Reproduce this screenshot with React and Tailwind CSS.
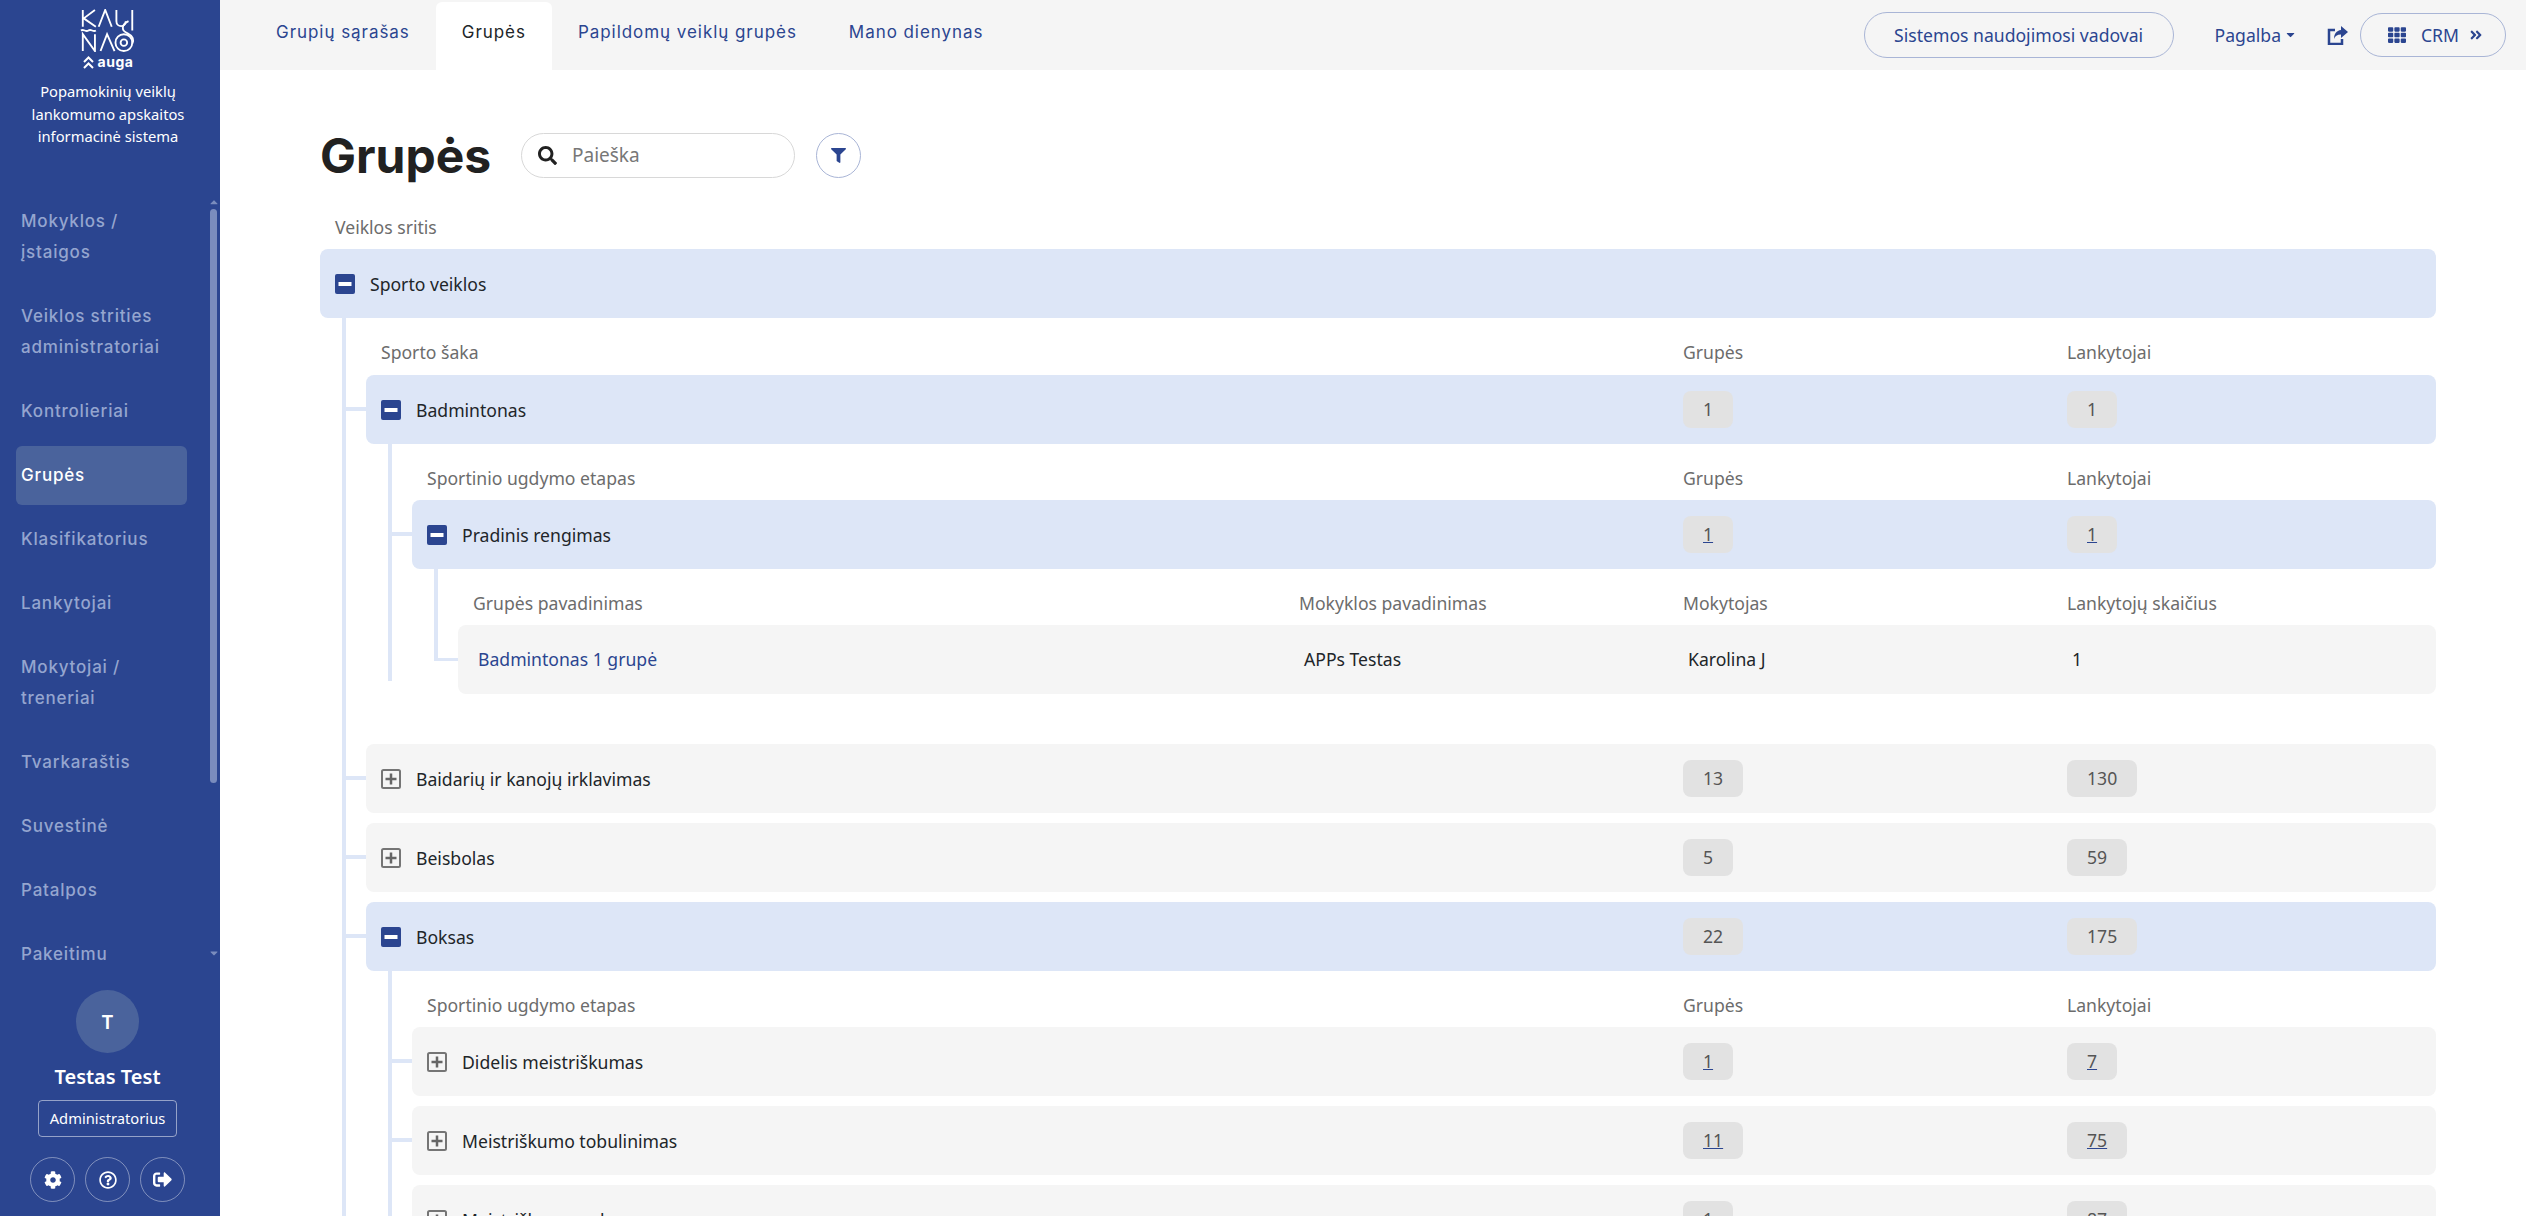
import { FaCog, FaRegQuestionCircle, FaSignOutAlt, FaSearch, FaFilter, FaTh, FaCaretDown, FaCaretUp, FaAngleDoubleRight } from "react-icons/fa"

const navItems = [
  { label: ["Mokyklos /", "įstaigos"] },
  { label: ["Veiklos strities", "administratoriai"] },
  { label: ["Kontrolieriai"] },
  { label: ["Grupės"], active: true },
  { label: ["Klasifikatorius"] },
  { label: ["Lankytojai"] },
  { label: ["Mokytojai /", "treneriai"] },
  { label: ["Tvarkaraštis"] },
  { label: ["Suvestinė"] },
  { label: ["Patalpos"] },
  { label: ["Pakeitimų"] },
]

const tabs = ["Grupių sąrašas", "Grupės", "Papildomų veiklų grupės", "Mano dienynas"]

function Logo() {
  return (
    <div className="flex flex-col items-center">
      <svg width="56" height="43" viewBox="0 0 60 46" fill="none" stroke="white" strokeWidth="2" className="block">
        <path d="M3 1v18M16 1 4 10l13 9" />
        <path d="M20 19 27 1l7 18" />
        <path d="M39 1v12c0 7 10 7 10 0 M56 1v22" />
        <path d="M1 23c3-2 5 2 8 0s5 2 8 0" />
        <path d="M3 45V27l13 18V27" />
        <path d="M22 45l7-18 8 18" />
        <path d="M52 13c-8 4-8 10-1 13 6 3 7 7 5 11" />
        <circle cx="47" cy="36" r="9" />
        <circle cx="47" cy="36" r="3.5" />
      </svg>
      <div className="flex items-center gap-[4px] mt-[2px] h-[16px]">
        <svg width="11" height="13" viewBox="0 0 11 13" fill="none" stroke="white" strokeWidth="2">
          <path d="M1 6l4.500-4.500L10 6M1 12l4.500-4.500L10 12" />
        </svg>
        <span className="font-['Inter',sans-serif] font-bold text-[14px] leading-none text-white tracking-[0.5px]">auga</span>
      </div>
    </div>
  )
}

function ShareIcon() {
  return (
    <svg width="21" height="19" viewBox="0 0 21 19" className="ml-[30px] shrink-0">
      <path d="M8 4H2v14h13v-5" fill="none" stroke="#2b4590" strokeWidth="2.500" />
      <path d="M14 0l7 6-7 6V8.500c-4 0-6 1.500-7 4.500 0-5 2.500-8.500 7-9z" fill="#2b4590" />
    </svg>
  )
}

function Sidebar() {
  return (
    <aside className="w-[220px] h-full shrink-0 bg-[#2b4590] flex flex-col text-white font-['Noto_Sans',sans-serif]">
      <div className="h-[192px] shrink-0 pt-[9px] pr-[4px] flex flex-col items-center">
        <Logo />
        <p className="mt-[10px] text-[14.720px] leading-[22.500px] text-center whitespace-nowrap">
          Popamokinių veiklų
          <br />
          lankomumo apskaitos
          <br />
          informacinė sistema
        </p>
      </div>
      <div className="relative h-[768px] shrink-0 overflow-hidden">
        <nav className="pl-[16px] pr-[33px] flex flex-col gap-[5px]">
          {navItems.map((item) => (
            <a
              key={item.label[0]}
              className={`block rounded-[6px] px-[5px] py-[14px] font-['Inter',sans-serif] font-medium text-[17px] tracking-[0.8px] leading-[31px] ${
                item.active ? "bg-[#4a639c] text-white" : "text-[#95a5cf]"
              }`}
            >
              {item.label.map((l) => (
                <div key={l} className="whitespace-nowrap">{l}</div>
              ))}
            </a>
          ))}
        </nav>
        <FaCaretUp className="absolute left-[208px] top-[4px] text-[#7a8cbd]" size={12} />
        <div className="absolute left-[210px] top-[17px] w-[7px] h-[574px] rounded-full bg-[#7a8cbd]" />
        <FaCaretDown className="absolute left-[208px] top-[755px] text-[#7a8cbd]" size={12} />
      </div>
      <div className="flex-1 flex flex-col items-center pt-[30px] pr-[5px]">
        <div className="w-[63px] h-[63px] rounded-full bg-[#4a639c] flex items-center justify-center text-[20px] font-semibold">T</div>
        <div className="mt-[9px] text-[20px] leading-[30px] font-semibold">Testas Test</div>
        <div className="mt-[8px] w-[139px] h-[37px] border border-white/50 rounded-[4px] flex items-center justify-center text-[14.720px]">Administratorius</div>
        <div className="mt-[20px] flex gap-[10px]">
          <RoundIcon><FaCog size={18} /></RoundIcon>
          <RoundIcon><FaRegQuestionCircle size={18} /></RoundIcon>
          <RoundIcon><FaSignOutAlt size={19} /></RoundIcon>
        </div>
      </div>
    </aside>
  )
}

function RoundIcon({ children }) {
  return <button className="w-[45px] h-[45px] rounded-full border border-white/40 flex items-center justify-center text-white">{children}</button>
}

function TopBar() {
  return (
    <header className="h-[70px] shrink-0 bg-[#f5f5f5] flex items-start pl-[30px] pr-[20px] font-['Noto_Sans',sans-serif] text-[#2b4590]">
      <div className="flex h-full pt-[2px]">
        {tabs.map((t) => (
          <a
            key={t}
            className={`px-[26px] pt-[17px] rounded-t-[6px] font-['Inter',sans-serif] text-[17px] tracking-[0.95px] leading-[26px] whitespace-nowrap ${
              t === "Grupės" ? "bg-white text-[#212529]" : ""
            }`}
          >
            {t}
          </a>
        ))}
      </div>
      <div className="ml-auto flex items-center h-full text-[17.600px]">
        <button className="h-[46px] w-[310px] rounded-full border border-[#a9b5d6] flex items-center justify-center">Sistemos naudojimosi vadovai</button>
        <span className="ml-[41px] flex items-center gap-[3px]">
          Pagalba <FaCaretDown size={13} />
        </span>
        <ShareIcon />
        <button className="ml-[12px] h-[44px] w-[146px] rounded-full border border-[#a9b5d6] flex items-center pl-[27px]">
          <FaTh size={18} />
          <span className="ml-[15px]">CRM</span>
          <FaAngleDoubleRight className="ml-[10px]" size={14} />
        </button>
      </div>
    </header>
  )
}

function MinusIcon() {
  return (
    <svg width="20" height="20" viewBox="0 0 20 20" className="shrink-0">
      <rect width="20" height="20" rx="2" fill="#2b4590" />
      <rect x="3.500" y="8" width="13" height="4" fill="white" />
    </svg>
  )
}

function PlusIcon() {
  return (
    <svg width="20" height="20" viewBox="0 0 20 20" fill="none" className="shrink-0">
      <rect x="1" y="1" width="18" height="18" rx="1.500" stroke="#757575" strokeWidth="2" />
      <path d="M10 4.500v11M4.500 10h11" stroke="#666" strokeWidth="2.500" />
    </svg>
  )
}

function Badge({ value, link }) {
  return (
    <span className="inline-flex items-center h-[37px] px-[20px] rounded-[8px] bg-[#e2e2e2] text-[#555]">
      <span className={link ? "underline decoration-[#2b4590]" : ""}>{value}</span>
    </span>
  )
}

function Row({ label, open, g, l, link, branch }) {
  return (
    <div className={`relative h-[69px] mb-[10px] flex items-center rounded-[8px] ${open ? "bg-[#dde6f7]" : "bg-[#f5f5f5]"}`}>
      {branch && <span className="absolute left-[-20px] top-[32px] w-[20px] h-[4px] bg-[#dde6f7]" />}
      <div className="flex-1 flex items-center pl-[15px] pt-[1px] gap-[15px] text-[#212529]">
        {open ? <MinusIcon /> : <PlusIcon />}
        <span>{label}</span>
      </div>
      {g !== undefined && (
        <>
          <div className="w-[384px]"><Badge value={g} link={link} /></div>
          <div className="w-[369px]"><Badge value={l} link={link} /></div>
        </>
      )}
    </div>
  )
}

function Heads({ title, top }) {
  return (
    <div className={`flex leading-[24px] pb-[10px] pl-[15px] text-[#6c6c6c] ${top}`}>
      <div className="flex-1">{title}</div>
      <div className="w-[384px]">Grupės</div>
      <div className="w-[369px]">Lankytojai</div>
    </div>
  )
}

// nested branch of the tree, the line runs down the left side
function Branch({ lineEnd, className = "", children }) {
  return (
    <div className={`relative ml-[22px] pl-[24px] ${className}`}>
      <span className={`absolute left-0 top-[-10px] w-[4px] bg-[#dde6f7] ${lineEnd}`} />
      {children}
    </div>
  )
}

export default function App() {
  return (
    <div className="w-full h-screen overflow-hidden flex bg-white font-['Noto_Sans',sans-serif] text-[17.600px]">
      <Sidebar />
      <div className="flex-1 min-w-0 flex flex-col h-full overflow-hidden">
        <TopBar />
        <main className="pl-[100px] pr-[90px]">
          <div className="flex items-center h-[45px] mt-[63px]">
            <h1 className="font-['Inter',sans-serif] font-bold text-[48px] leading-none text-[#212121] w-[201px]">Grupės</h1>
            <div className="w-[274px] h-[45px] rounded-full border border-[#d8d8d8] flex items-center pl-[16px] gap-[15px] text-[19px] text-[#777]">
              <FaSearch className="text-[#212121]" size={19} />
              Paieška
            </div>
            <button className="ml-[21px] w-[45px] h-[45px] rounded-full border border-[#a9b5d6] flex items-center justify-center text-[#2b4590]">
              <FaFilter size={15} />
            </button>
          </div>

          <div className="mt-[37px] h-[24px] leading-[24px] pl-[15px] text-[#6c6c6c]">Veiklos sritis</div>
          <div className="mt-[10px]">
            <Row label="Sporto veiklos" open />
            <Branch lineEnd="bottom-0">
              <Heads title="Sporto šaka" top="pt-[12px] !pb-[11px]" />
              <Row label="Badmintonas" open g={1} l={1} branch />
              <Branch lineEnd="bottom-[13px]" className="mb-[50px]">
                <Heads title="Sportinio ugdymo etapas" top="pt-[12px]" />
                <Row label="Pradinis rengimas" open g={1} l={1} link branch />
                <Branch lineEnd="bottom-[33px]">
                  <div className="flex leading-[24px] pt-[12px] pb-[10px] pl-[15px] text-[#6c6c6c]">
                    <div className="flex-1">Grupės pavadinimas</div>
                    <div className="w-[384px]">Mokyklos pavadinimas</div>
                    <div className="w-[384px]">Mokytojas</div>
                    <div className="w-[369px]">Lankytojų skaičius</div>
                  </div>
                  <div className="relative h-[69px] mb-[10px] flex items-center rounded-[8px] bg-[#f5f5f5] text-[#212529]">
                    <span className="absolute left-[-20px] top-[33px] w-[20px] h-[3px] bg-[#dde6f7]" />
                    <a className="flex-1 pl-[20px] text-[#2b4590]">Badmintonas 1 grupė</a>
                    <div className="w-[384px] pl-[5px]">APPs Testas</div>
                    <div className="w-[384px] pl-[5px]">Karolina J</div>
                    <div className="w-[369px] pl-[5px]">1</div>
                  </div>
                </Branch>
              </Branch>
              <Row label="Baidarių ir kanojų irklavimas" g={13} l={130} branch />
              <Row label="Beisbolas" g={5} l={59} branch />
              <Row label="Boksas" open g={22} l={175} branch />
              <Branch lineEnd="bottom-0">
                <Heads title="Sportinio ugdymo etapas" top="pt-[12px]" />
                <Row label="Didelis meistriškumas" g={1} l={7} link branch />
                <Row label="Meistriškumo tobulinimas" g={11} l={75} link branch />
                <Row label="Meistriškumo pakopa" g={1} l={87} link branch />
              </Branch>
            </Branch>
          </div>
        </main>
      </div>
    </div>
  )
}
